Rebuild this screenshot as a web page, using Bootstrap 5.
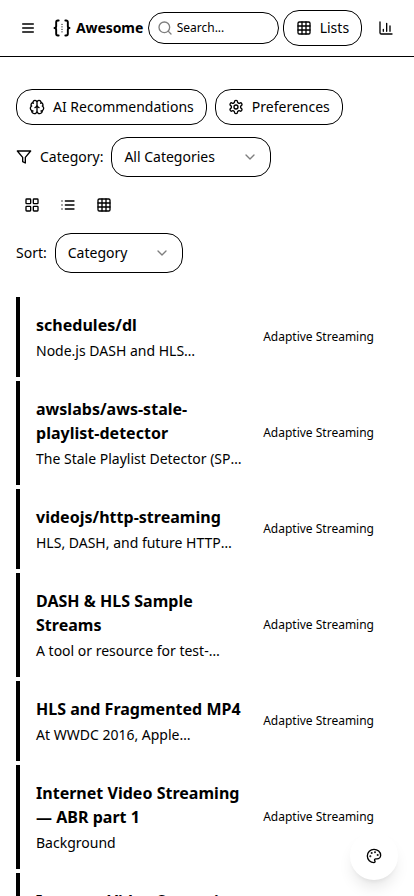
<!DOCTYPE html>
<html lang="en">
<head>
<meta charset="utf-8">
<meta name="viewport" content="width=device-width, initial-scale=1">
<title>Awesome Lists</title>
<link href="https://cdn.jsdelivr.net/npm/bootstrap@5.3.0/dist/css/bootstrap.min.css" rel="stylesheet">
<style>
body{font-family:"Noto Sans",sans-serif;font-size:14px;line-height:20px;color:#000;background:#fff;overflow:hidden;height:100vh}
svg.ico{width:16px;height:16px;flex:none;fill:none;stroke:currentColor;stroke-width:2;stroke-linecap:round;stroke-linejoin:round}
.topbar{height:57px;border-bottom:1px solid #000;padding:0 12px}
.icon-btn{width:32px;height:36px;padding:0;border:0;color:#000}
.brand{margin-left:8px;font-size:14px;font-weight:700;letter-spacing:-.08px;color:#000;gap:4px;width:96px}
.brand svg.ico{width:20px;height:20px}
.pill{border:1px solid #000;border-radius:16px;background:#fff;color:#000;font-size:14px;line-height:20px}
.btn.pill{height:36px;padding:0 12px;gap:8px}
.search{width:131px;height:32px;padding:0 8px;gap:4px;font-size:12px}
.search svg,.chev{opacity:.5}
.pick{height:40px;padding:0 12px}
.pick-category{width:160px}
.pick-sort{width:128px}
.content{padding:32px 16px 0}
.controls{gap:12px}
.view-btn{width:32px;height:32px;padding:0;border:0;color:#000}
.entries{margin-top:24px;gap:4px}
.entry{border-left:4px solid #000;padding:16px 24px 16px 16px;gap:16px}
.entry h3{font-size:16px;line-height:24px;font-weight:700;letter-spacing:.02px;margin:0 0 4px}
.entry p{margin:0}
.tag{font-size:12px;line-height:16px;flex:none}
.theme-btn{right:16px;bottom:16px;width:48px;height:48px;background:#fff;color:#000;border:0;box-shadow:0 10px 15px -3px rgba(0,0,0,.1),0 4px 6px -4px rgba(0,0,0,.1)}
</style>
</head>
<body>
<header class="topbar d-flex align-items-center">
  <button class="btn icon-btn d-flex align-items-center justify-content-center" aria-label="Menu"><svg class="ico" viewBox="0 0 24 24"><path d="M4 6h16M4 12h16M4 18h16"/></svg></button>
  <a class="brand d-flex align-items-center text-decoration-none" href="#"><svg class="ico" viewBox="0 0 24 24"><path d="M8 3H7a2 2 0 0 0-2 2v5a2 2 0 0 1-2 2 2 2 0 0 1 2 2v5a2 2 0 0 0 2 2h1M16 21h1a2 2 0 0 0 2-2v-5a2 2 0 0 1 2-2 2 2 0 0 1-2-2V5a2 2 0 0 0-2-2h-1" stroke-width="2.300"/><path d="M12 7.500v.01M12 10.500v.01M12 13.500v.01M12 16.500v.01" stroke-width="1.500"/></svg><span>Awesome</span></a>
  <div class="pill search d-flex align-items-center flex-shrink-0"><svg class="ico" viewBox="0 0 24 24"><circle cx="11" cy="11" r="8"/><path d="m21 21-4.3-4.3"/></svg><span>Search...</span></div>
  <button class="btn pill d-flex align-items-center ms-1 flex-shrink-0"><svg class="ico" viewBox="0 0 24 24"><rect x="3" y="3" width="18" height="18" rx="2"/><path d="M3 9h18M3 15h18M9 3v18M15 3v18"/></svg>Lists</button>
  <button class="btn icon-btn d-flex align-items-center justify-content-center ms-2" aria-label="Statistics"><svg class="ico" viewBox="0 0 24 24"><path d="M3 3v16a2 2 0 0 0 2 2h16M18 17V9M13 17V5M8 17v-3"/></svg></button>
</header>

<main class="content">
  <div class="controls d-flex flex-column">
    <div class="d-flex gap-2">
      <button class="btn pill d-flex align-items-center"><svg class="ico" viewBox="0 0 24 24"><path d="M12 5a3 3 0 1 0-5.997.125 4 4 0 0 0-2.526 5.77 4 4 0 0 0 .556 6.588A4 4 0 1 0 12 18ZM12 5a3 3 0 1 1 5.997.125 4 4 0 0 1 2.526 5.77 4 4 0 0 1-.556 6.588A4 4 0 1 1 12 18ZM15 13a4.500 4.500 0 0 1-3-4 4.500 4.500 0 0 1-3 4M17.599 6.500a3 3 0 0 0 .399-1.375M6.003 5.125A3 3 0 0 0 6.401 6.500M3.477 10.896a4 4 0 0 1 .585-.396M19.938 10.500a4 4 0 0 1 .585.396M6 18a4 4 0 0 1-1.967-.516M19.967 17.484A4 4 0 0 1 18 18"/></svg>AI Recommendations</button>
      <button class="btn pill d-flex align-items-center"><svg class="ico" viewBox="0 0 24 24"><path d="M12.220 2h-.44a2 2 0 0 0-2 2v.18a2 2 0 0 1-1 1.730l-.43.25a2 2 0 0 1-2 0l-.15-.08a2 2 0 0 0-2.730.73l-.22.38a2 2 0 0 0 .73 2.730l.15.1a2 2 0 0 1 1 1.720v.51a2 2 0 0 1-1 1.740l-.15.09a2 2 0 0 0-.73 2.730l.22.38a2 2 0 0 0 2.730.73l.15-.08a2 2 0 0 1 2 0l.43.25a2 2 0 0 1 1 1.730V20a2 2 0 0 0 2 2h.44a2 2 0 0 0 2-2v-.18a2 2 0 0 1 1-1.730l.43-.25a2 2 0 0 1 2 0l.15.08a2 2 0 0 0 2.730-.73l.22-.39a2 2 0 0 0-.73-2.730l-.15-.08a2 2 0 0 1-1-1.740v-.5a2 2 0 0 1 1-1.740l.15-.09a2 2 0 0 0 .73-2.730l-.22-.38a2 2 0 0 0-2.730-.73l-.15.08a2 2 0 0 1-2 0l-.43-.25a2 2 0 0 1-1-1.730V4a2 2 0 0 0-2-2z"/><circle cx="12" cy="12" r="3"/></svg>Preferences</button>
    </div>
    <div class="d-flex align-items-center gap-2">
      <svg class="ico" viewBox="0 0 24 24"><path d="M22 3H2l8 9.460V19l4 2v-8.540z"/></svg><span>Category:</span>
      <div class="pill pick pick-category d-flex align-items-center justify-content-between" role="combobox"><span>All Categories</span><svg class="ico chev" viewBox="0 0 24 24"><path d="m6 9 6 6 6-6"/></svg></div>
    </div>
    <div class="d-flex gap-1">
      <button class="btn view-btn d-flex align-items-center justify-content-center" aria-label="Grid view"><svg class="ico" viewBox="0 0 24 24"><rect x="3" y="3" width="7" height="7" rx="1"/><rect x="14" y="3" width="7" height="7" rx="1"/><rect x="14" y="14" width="7" height="7" rx="1"/><rect x="3" y="14" width="7" height="7" rx="1"/></svg></button>
      <button class="btn view-btn d-flex align-items-center justify-content-center" aria-label="List view"><svg class="ico" viewBox="0 0 24 24"><path d="M3 12h.01M3 18h.01M3 6h.01M8 12h13M8 18h13M8 6h13"/></svg></button>
      <button class="btn view-btn d-flex align-items-center justify-content-center" aria-label="Compact view"><svg class="ico" viewBox="0 0 24 24"><rect x="3" y="3" width="18" height="18" rx="2"/><path d="M3 9h18M3 15h18M9 3v18M15 3v18"/></svg></button>
    </div>
    <div class="d-flex align-items-center gap-2">
      <span>Sort:</span>
      <div class="pill pick pick-sort d-flex align-items-center justify-content-between" role="combobox"><span>Category</span><svg class="ico chev" viewBox="0 0 24 24"><path d="m6 9 6 6 6-6"/></svg></div>
    </div>
  </div>

  <div class="entries d-flex flex-column">
    <article class="entry d-flex align-items-center justify-content-between"><div><h3>schedules/dl</h3><p>Node.js DASH and HLS…</p></div><span class="tag">Adaptive Streaming</span></article>
    <article class="entry d-flex align-items-center justify-content-between"><div><h3>awslabs/aws-stale-playlist-detector</h3><p class="text-nowrap">The Stale Playlist Detector (SP<span class="d-inline-block">…</span></p></div><span class="tag">Adaptive Streaming</span></article>
    <article class="entry d-flex align-items-center justify-content-between"><div><h3>videojs/http-streaming</h3><p class="text-nowrap">HLS, DASH, and future HTTP<span class="d-inline-block">…</span></p></div><span class="tag">Adaptive Streaming</span></article>
    <article class="entry d-flex align-items-center justify-content-between"><div><h3>DASH &amp; HLS Sample Streams</h3><p>A tool or resource for test-…</p></div><span class="tag">Adaptive Streaming</span></article>
    <article class="entry d-flex align-items-center justify-content-between"><div><h3>HLS and Fragmented MP4</h3><p>At WWDC 2016, Apple…</p></div><span class="tag">Adaptive Streaming</span></article>
    <article class="entry d-flex align-items-center justify-content-between"><div><h3>Internet Video Streaming — ABR part 1</h3><p>Background</p></div><span class="tag">Adaptive Streaming</span></article>
    <article class="entry d-flex align-items-center justify-content-between"><div><h3>Internet Video Streaming — ABR part 2</h3><p>Background</p></div><span class="tag">Adaptive Streaming</span></article>
  </div>
</main>

<button class="btn theme-btn position-fixed rounded-circle d-flex align-items-center justify-content-center p-0" aria-label="Theme"><svg class="ico" viewBox="0 0 24 24"><g fill="currentColor"><circle cx="13.500" cy="6.500" r=".5"/><circle cx="17.500" cy="10.500" r=".5"/><circle cx="8.500" cy="7.500" r=".5"/><circle cx="6.500" cy="12.500" r=".5"/></g><path d="M12 2C6.500 2 2 6.500 2 12s4.500 10 10 10c.926 0 1.648-.746 1.648-1.688 0-.437-.18-.835-.437-1.125-.29-.289-.438-.652-.438-1.125a1.640 1.640 0 0 1 1.668-1.668h1.996c3.051 0 5.555-2.503 5.555-5.554C21.965 6.012 17.461 2 12 2z"/></svg></button>
<script src="https://cdn.jsdelivr.net/npm/bootstrap@5.3.0/dist/js/bootstrap.bundle.min.js"></script>
</body>
</html>
